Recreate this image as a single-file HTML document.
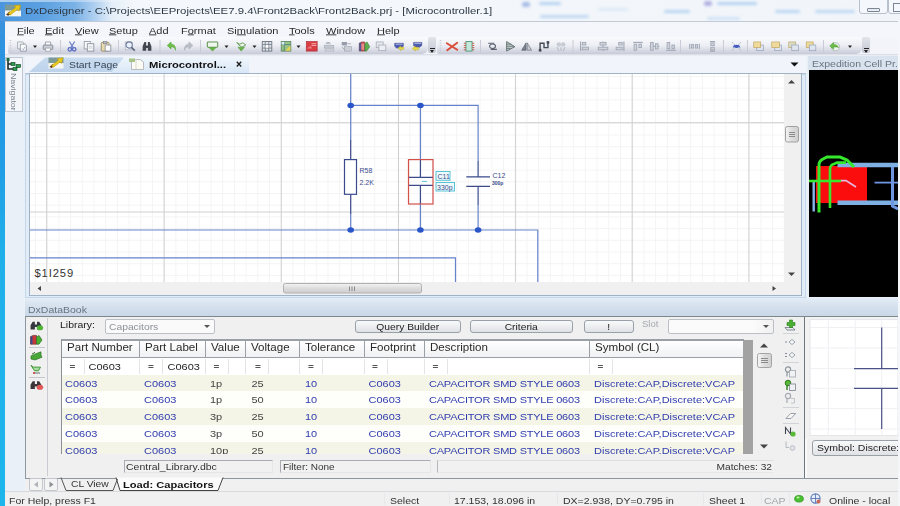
<!DOCTYPE html>
<html>
<head>
<meta charset="utf-8">
<title>DxDesigner</title>
<style>
html,body{margin:0;padding:0}
body{width:900px;height:506px;position:relative;overflow:hidden;background:#eef2f8;font-family:"Liberation Sans",sans-serif;font-size:11px;color:#222}
.a{position:absolute}
.t{position:absolute;white-space:nowrap;line-height:1;transform:scaleY(.87)}
.sq{display:inline-block;transform:scaleY(.87)}
#blur{position:absolute;left:0;top:0;width:900px;height:506px;filter:blur(0.5px)}
.menu{top:25px;font-size:11px;color:#2a2a2a}
.hdr{background:linear-gradient(#e4edf7,#d7e2ee 40%,#c9d7e7);}
.th{position:absolute;top:340px;height:18px;box-sizing:border-box;border-right:1px solid #9aa0a8;border-bottom:1px solid #9aa0a8;border-top:1px solid #9aa0a8;background:linear-gradient(#ffffff,#f0f1f3);font-size:11.6px;color:#2a2a2a;line-height:13px;padding-left:5px;white-space:nowrap;overflow:hidden}
.row{position:absolute;left:62px;width:681px}
.c{position:absolute;font-size:11px;white-space:nowrap;line-height:1;color:#2f3cae;transform:scaleY(.87)}
.k{color:#444}
.eq{position:absolute;top:361.5px;font-size:10px;color:#555;line-height:1;font-weight:bold;transform:scaleY(.87)}
.btn{position:absolute;box-sizing:border-box;border:1px solid #9aa0a8;border-radius:3px;background:linear-gradient(#f8f9fa,#eceef0 50%,#dfe1e5);font-size:10.3px;color:#222;text-align:center;white-space:nowrap;line-height:11px}
.st{position:absolute;top:495px;font-size:10.5px;color:#333;white-space:nowrap;line-height:1;transform:scaleY(.87)}
.fld{position:absolute;box-sizing:border-box;top:460px;height:13px;border:1px solid #e4e6e8;border-top-color:#a8acb2;border-left-color:#a8acb2;background:#f1f1f1;font-size:10.5px;line-height:11px;color:#333;padding-left:1px;white-space:nowrap}
</style>
</head>
<body>
<div id="blur">
<div class="a" style="left:0;top:0;width:900px;height:21px;background:linear-gradient(90deg,#4a95de 0px,#5a9fe0 40px,#7ab2e6 75px,#b0d0f0 95px,#e4eef8 112px,#f4f7fb 135px,#f4f7fb 300px,#f1f5fa 900px)"></div>
<div class="a" style="left:0;top:0;width:140px;height:2px;background:linear-gradient(90deg,rgba(255,255,255,.55),rgba(255,255,255,.3) 100px,rgba(255,255,255,0))"></div>
<div class="a" style="left:522px;top:2px;width:8px;height:5px;background:#6a8cd8;opacity:0.55;filter:blur(1.6px);border-radius:2px"></div>
<div class="a" style="left:539px;top:2px;width:22px;height:3px;background:#8ab8e8;opacity:0.6;filter:blur(1.6px);border-radius:2px"></div>
<div class="a" style="left:540px;top:15px;width:49px;height:3px;background:#8ab8e8;opacity:0.5;filter:blur(1.6px);border-radius:2px"></div>
<div class="a" style="left:664px;top:10px;width:26px;height:3px;background:#8ab8e8;opacity:0.55;filter:blur(1.6px);border-radius:2px"></div>
<div class="a" style="left:704px;top:1px;width:8px;height:5px;background:#7a78d0;opacity:0.55;filter:blur(1.6px);border-radius:2px"></div>
<div class="a" style="left:717px;top:2px;width:40px;height:3px;background:#8ab8e8;opacity:0.6;filter:blur(1.6px);border-radius:2px"></div>
<div class="a" style="left:775px;top:10px;width:25px;height:3px;background:#8ab8e8;opacity:0.55;filter:blur(1.6px);border-radius:2px"></div>
<div class="a" style="left:815px;top:10px;width:40px;height:3px;background:#8ab8e8;opacity:0.5;filter:blur(1.6px);border-radius:2px"></div>
<div class="a" style="left:707px;top:17px;width:33px;height:3px;background:#9ac0ea;opacity:0.4;filter:blur(1.6px);border-radius:2px"></div>
<div class="a" style="left:598px;top:8px;width:30px;height:3px;background:#a8ccee;opacity:0.3;filter:blur(1.6px);border-radius:2px"></div>
<div class="a" style="left:0;top:21px;width:5px;height:485px;background:linear-gradient(#3a92de 0,#2494e2 10%,#229ee6 30%,#1fb0ea 48%,#1cb6ec 100%)"></div>
<div class="a" style="left:5px;top:21px;width:893px;height:1px;background:#c2cad4"></div>
<div class="a" style="left:5px;top:22px;width:893px;height:16px;background:#f4f6fb"></div>
<div class="a" style="left:859px;top:-3px;width:29px;height:17px;border:1px solid #b8c0cc;border-radius:3px;box-sizing:border-box;background:#f4f7fb"></div>
<div class="a" style="left:867px;top:8px;width:13px;height:4px;border:1px solid #7c8692;border-radius:1px;box-sizing:border-box;background:#e8ecf2"></div>
<div class="a" style="left:888px;top:-3px;width:20px;height:17px;border:1px solid #b8c0cc;border-radius:3px;box-sizing:border-box;background:#f4f7fb"></div>
<div class="a" style="left:893px;top:3px;width:10px;height:9px;border:1.5px solid #7c8692;box-sizing:border-box"></div>
<div class="t" style="left:25px;top:5px;font-size:11.4px;color:#2c3844">DxDesigner - C:\Projects\EEProjects\EE7.9.4\Front2Back\Front2Back.prj - [Microcontroller.1]</div>
<svg class="a" style="left:5px;top:4px" width="16" height="13" viewBox="0 0 15 12"><rect x="0" y="0.5" width="15" height="6" fill="#7c9a98"/><rect x="0" y="6" width="15" height="5.5" fill="#f6f6f2"/><path d="M1 10L4 7L6 9L3 11Z" fill="#5a3a20"/><path d="M3 8.5L10 3.2L8.6 1.6L14.5 0.8L13 6.6L11.6 5L5 10.2Z" fill="#e8c81c" stroke="#b89a10" stroke-width=".5"/></svg>
<div class="t menu" style="left:17px"><u>F</u>ile</div>
<div class="t menu" style="left:45px"><u>E</u>dit</div>
<div class="t menu" style="left:75px"><u>V</u>iew</div>
<div class="t menu" style="left:109px"><u>S</u>etup</div>
<div class="t menu" style="left:149px"><u>A</u>dd</div>
<div class="t menu" style="left:181px">F<u>o</u>rmat</div>
<div class="t menu" style="left:227px">Si<u>m</u>ulation</div>
<div class="t menu" style="left:289px"><u>T</u>ools</div>
<div class="t menu" style="left:326px"><u>W</u>indow</div>
<div class="t menu" style="left:377px"><u>H</u>elp</div>
<div class="a" style="left:5px;top:38px;width:893px;height:17px;background:#f2f4fa"></div>
<div class="a" style="left:8px;top:37px;width:420px;height:17px;border-radius:0 0 6px 2px;background:linear-gradient(#fafbfd,#eceef4 50%,#c8cad8)"></div>
<div class="a" style="left:437px;top:37px;width:425px;height:17px;border-radius:0 0 6px 2px;background:linear-gradient(#fafbfd,#eceef4 50%,#c8cad8)"></div>
<div class="a" style="left:5px;top:54px;width:893px;height:2px;background:linear-gradient(#d8dae4,#eef2f8)"></div>
<div class="a" style="left:428px;top:37px;width:8px;height:16px;border-radius:2px;background:linear-gradient(#e2e4ea,#c4c7d2)"></div>
<div class="a" style="left:430px;top:50px;width:0;height:0;border-left:2.5px solid transparent;border-right:2.5px solid transparent;border-top:3px solid #222"></div>
<div class="a" style="left:430px;top:48px;width:5px;height:1px;background:#222"></div>
<div class="a" style="left:862px;top:37px;width:8px;height:16px;border-radius:2px;background:linear-gradient(#e2e4ea,#c4c7d2)"></div>
<div class="a" style="left:864px;top:50px;width:0;height:0;border-left:2.5px solid transparent;border-right:2.5px solid transparent;border-top:3px solid #222"></div>
<div class="a" style="left:864px;top:48px;width:5px;height:1px;background:#222"></div>
<svg class="a" style="left:0;top:0" width="900" height="60" viewBox="0 0 900 60"><path d="M10.5 40V53" stroke="#c4c8d2" stroke-width="1.5" stroke-dasharray="1 1.5"/>
<path d="M440.5 40V53" stroke="#c4c8d2" stroke-width="1.5" stroke-dasharray="1 1.5"/>
<g transform="translate(16.8,41.1) scale(.87)" opacity=".88"><path d="M1 1H7L8 2V9H1Z" fill="#fdfdfd" stroke="#9098a4" stroke-width="1"/><path d="M4 3.5H10L11 4.5V11.5H4Z" fill="#fff" stroke="#808894" stroke-width="1"/><path d="M6 8.5L7.5 10L9.5 6.5" stroke="#9aa4b0" fill="none"/></g>
<path d="M33 45.6H37L35 48Z" fill="#222"/>
<g transform="translate(42.8,41.1) scale(.87)" opacity=".88"><path d="M3 1H9V5H3Z" fill="#fff" stroke="#8a909a"/><rect x="0.5" y="4.5" width="11" height="5" rx="1" fill="#c8ccd4" stroke="#6c7480"/><rect x="3" y="8" width="6" height="3.5" fill="#fff" stroke="#8a909a" stroke-width=".8"/></g>
<path d="M60.5 40V53" stroke="#c9ccd6" stroke-width="1"/>
<g transform="translate(66.8,41.1) scale(.87)" opacity=".88"><path d="M3 0.5L7.5 8M9 0.5L4.5 8" stroke="#5a6ec0" stroke-width="1.4" fill="none"/><circle cx="3.5" cy="9.5" r="2" fill="none" stroke="#3f58c0" stroke-width="1.4"/><circle cx="8.5" cy="9.5" r="2" fill="none" stroke="#3f58c0" stroke-width="1.4"/></g>
<g transform="translate(83.8,41.1) scale(.87)" opacity=".88"><rect x="0.5" y="0.5" width="7" height="8.5" fill="#fff" stroke="#8a919c"/><rect x="4" y="3" width="7.5" height="8.5" fill="#fdfdfd" stroke="#7c8490"/><path d="M5.5 6H10M5.5 8H10" stroke="#b4bac4" stroke-width=".8"/></g>
<g transform="translate(100.8,41.1) scale(.87)" opacity=".88"><rect x="0.5" y="1.5" width="9" height="10" rx="1" fill="#e6d8a8" stroke="#8a7a50"/><rect x="3" y="0.5" width="4" height="2.5" fill="#b0b4bc" stroke="#70747c" stroke-width=".7"/><rect x="5" y="4.5" width="6.5" height="7" fill="#fff" stroke="#808894"/></g>
<path d="M118.5 40V53" stroke="#c9ccd6" stroke-width="1"/>
<g transform="translate(124.8,41.1) scale(.87)" opacity=".88"><rect x="0.5" y="1" width="8" height="9" fill="#f4f8ff" stroke="#a0a8b4" stroke-width=".8"/><circle cx="5" cy="4.5" r="3.6" fill="#eaf4ff" stroke="#5a6a8c" stroke-width="1.2"/><path d="M7.6 7.2L11.5 11" stroke="#4a5670" stroke-width="1.8"/></g>
<g transform="translate(141.8,41.1) scale(.87)" opacity=".88"><path d="M1 11V6L3 1H5V5H7V1H9L11 6V11H7V8H5V11Z" fill="#2c3038"/></g>
<path d="M160 40V53" stroke="#c9ccd6" stroke-width="1"/>
<g transform="translate(166.3,41.1) scale(.87)" opacity=".88"><path d="M1 5L5.5 1V3.5C9 3.5 11 6 10.5 10.5C9.8 7.6 8.3 6.6 5.5 6.6V9Z" fill="#5cb830" stroke="#3c9418" stroke-width=".6"/></g>
<g transform="translate(183.3,41.1) scale(.87)" opacity=".88"><path d="M11 5L6.5 1V3.5C3 3.5 1 6 1.5 10.5C2.2 7.6 3.7 6.6 6.5 6.6V9Z" fill="#b4b8c0" stroke="#9ca0aa" stroke-width=".6"/></g>
<path d="M200.5 40V53" stroke="#c9ccd6" stroke-width="1"/>
<g transform="translate(207.3,41.1) scale(.87)" opacity=".88"><rect x="0" y="1" width="12" height="6" rx="1" fill="#f0f8ee" stroke="#4c8a3c" stroke-width="1.2"/><path d="M2 7.5H10L6 11.5Z" fill="#58b030" stroke="#3c8c20" stroke-width=".6"/></g>
<path d="M224.5 45.6H228.5L226.5 48Z" fill="#222"/>
<g transform="translate(235.8,41.1) scale(.87)" opacity=".88"><path d="M1 1.5L4 4" stroke="#3c8c20" stroke-width="1.2"/><path d="M3 4L8 2L11.5 4.5L7 7Z" fill="#eef6ea" stroke="#4c8a3c"/><path d="M2.5 7H10L6.2 11.5Z" fill="#58b030" stroke="#3c8c20" stroke-width=".6"/></g>
<path d="M252.5 45.6H256.5L254.5 48Z" fill="#222"/>
<g transform="translate(261.8,41.1) scale(.87)" opacity=".88"><rect x="0.5" y="0.5" width="11" height="11" fill="#dfe4ea" stroke="#5a6470"/><path d="M0.5 4H11.5M0.5 8H11.5M4 .5V11.5M8 .5V11.5" stroke="#5a6470" stroke-width=".9"/><rect x="4.4" y="4.4" width="3.2" height="3.2" fill="#fff"/></g>
<g transform="translate(280.8,41.1) scale(.87)" opacity=".88"><rect x="0.5" y="0.5" width="11" height="11" fill="#8cc070" stroke="#4a7a5a"/><path d="M0.5 4H11.5M4 .5V11.5" stroke="#3a6a7a" stroke-width=".9"/><path d="M5 11L11 5V11Z" fill="#e4d040"/><rect x="1" y="1" width="3" height="3" fill="#d8ecf4"/></g>
<path d="M296.5 45.6H300.5L298.5 48Z" fill="#222"/>
<g transform="translate(306.3,41.1) scale(.87)" opacity=".88"><rect x="0" y="0.5" width="12.5" height="11" fill="#d8262c" stroke="#a81820" stroke-width=".8"/><path d="M6 3H11.5M6 5H11.5" stroke="#f8b0b0" stroke-width="1"/><path d="M0.5 8.5L5 5.5L7 8.5" fill="#f07070"/></g>
<g transform="translate(323.8,41.1) scale(.87)" opacity=".88"><path d="M2 3H8M3 1.5H7" stroke="#a8acb6" stroke-width="1.2"/><rect x="0.5" y="5" width="11" height="3" fill="#c4c8d0" stroke="#9ca0ac" stroke-width=".7"/><rect x="1.5" y="9" width="10" height="2.5" fill="#d4d7de" stroke="#a8acb6" stroke-width=".7"/></g>
<g transform="translate(341.3,41.1) scale(.87)" opacity=".88"><rect x="0.5" y="1" width="6" height="4" fill="#8c929e"/><path d="M7 3H11" stroke="#a8acb6" stroke-width="1.2"/><rect x="3.5" y="6" width="8" height="5.5" fill="#c8ccd4" stroke="#9ca0ac" stroke-width=".7"/><path d="M1 7L4 10" stroke="#8c929e" stroke-width="1"/></g>
<g transform="translate(358.8,41.1) scale(.87)" opacity=".88"><path d="M0.5 2.5L3 1H7V11.5H0.5Z" fill="#c83838" stroke="#6a3030" stroke-width=".7"/><path d="M3 3H6V10H3Z" fill="#e88080"/><path d="M7 3L9.5 1L12.5 6.5L9 11.5H7Z" fill="#48a838" stroke="#2c6c24" stroke-width=".7"/><rect x="0.5" y="2" width="2.2" height="9.5" fill="#3a4a8a"/></g>
<g transform="translate(375.8,41.1) scale(.87)" opacity=".88"><rect x="0.5" y="1" width="8" height="6.5" fill="#e6e8ee" stroke="#a4a8b4"/><rect x="3.5" y="4.5" width="8" height="6.5" fill="#eef0f4" stroke="#a4a8b4"/></g>
<g transform="translate(393.8,41.1) scale(.87)" opacity=".88"><path d="M1 2.5H11V6L8 8H3L1 6Z" fill="#3848a8" stroke="#28347c" stroke-width=".6"/><path d="M2 3.6H10" stroke="#c8d0f0" stroke-width=".9"/><path d="M5 8L8 5.5V7H11.5V9.5H8V11Z" fill="#e8dc30" stroke="#a89c18" stroke-width=".5"/></g>
<g transform="translate(411.8,41.1) scale(.87)" opacity=".88"><path d="M2 1.5H11.5V5L9 7H4L2 5Z" fill="#3848a8" stroke="#28347c" stroke-width=".6"/><path d="M3 2.6H10.5" stroke="#c8d0f0" stroke-width=".9"/><path d="M0.5 8.5L4 5.5V7.2H8V10H4V11.5Z" fill="#e8dc30" stroke="#a89c18" stroke-width=".5"/></g>
<g transform="translate(446.8,41.1) scale(.87)" opacity=".88"><path d="M0 2.5L12 10M12 2L0.5 10.5" stroke="#d83820" stroke-width="2.2" stroke-linecap="round"/></g>
<g transform="translate(463.8,41.1) scale(.87)" opacity=".88"><rect x="2.5" y="0.5" width="7" height="11" fill="#bfe8d8" stroke="#3c8a6c"/><path d="M0 2.5H2.5M0 5H2.5M0 7.5H2.5M0 10H2.5M9.5 2.5H12M9.5 5H12M9.5 7.5H12M9.5 10H12" stroke="#c0442c" stroke-width="1.1"/></g>
<path d="M480.5 40V53" stroke="#c9ccd6" stroke-width="1"/>
<g transform="translate(487.3,41.1) scale(.87)" opacity=".88"><ellipse cx="6" cy="6" rx="3.4" ry="2.6" fill="none" stroke="#4a525e" stroke-width="1.3"/><path d="M1 2.5H8M4 9.5H11" stroke="#4a525e" stroke-width="1.2"/></g>
<g transform="translate(505.3,41.1) scale(.87)" opacity=".88"><path d="M1.5 0.5V11.5L11 6.5Z" fill="#b8c4c0" stroke="#4a5a56" stroke-width="1"/><path d="M1.5 3.5H7M1.5 6H10M1.5 8.5H6" stroke="#4a5a56" stroke-width=".8"/></g>
<g transform="translate(521.3,41.1) scale(.87)" opacity=".88"><path d="M5.5 2V10.5H0.5Z" fill="#6a7480" stroke="#4a525e" stroke-width=".8"/><path d="M6.8 2V10.5H11.8Z" fill="#c4cad2" stroke="#5a626e" stroke-width=".8"/></g>
<g transform="translate(538.8,41.1) scale(.87)" opacity=".88"><path d="M1.5 10V2.5H6V7.5H10.5V1" fill="none" stroke="#2c3440" stroke-width="1.6"/><rect x="0" y="9" width="3" height="3" fill="#2c3440"/><rect x="9" y="0" width="3" height="3" fill="#2c3440"/></g>
<g transform="translate(555.8,41.1) scale(.87)" opacity=".88"><circle cx="3.5" cy="4" r="2.6" fill="#c4c8d0"/><circle cx="8.5" cy="4" r="2.6" fill="#c4c8d0"/><path d="M1.5 7L3.5 11.5M6 7V11M10.5 7L8.5 11.5" stroke="#b0b4be" stroke-width="1.2"/></g>
<path d="M573 40V53" stroke="#c9ccd6" stroke-width="1"/>
<g transform="translate(579.3,41.1) scale(.87)" opacity=".88"><path d="M1.5 .5V11.5" stroke="#969eac" stroke-width="1.3"/><rect x="3.5" y="1.5" width="4" height="3" fill="#cdd1da" stroke="#969eac"/><rect x="3.5" y="7" width="7" height="3" fill="#cdd1da" stroke="#969eac"/></g>
<g transform="translate(597.8,41.1) scale(.87)" opacity=".88"><path d="M6 .5V11.5" stroke="#969eac" stroke-width="1.3"/><rect x="2.5" y="1.5" width="7" height="3" fill="#cdd1da" stroke="#969eac"/><rect x="0.5" y="7" width="11" height="3" fill="#cdd1da" stroke="#969eac"/></g>
<g transform="translate(614.8,41.1) scale(.87)" opacity=".88"><path d="M10.5 .5V11.5" stroke="#969eac" stroke-width="1.3"/><rect x="4.5" y="1.5" width="4" height="3" fill="#cdd1da" stroke="#969eac"/><rect x="1.5" y="7" width="7" height="3" fill="#cdd1da" stroke="#969eac"/></g>
<g transform="translate(632.8,41.1) scale(.87)" opacity=".88"><path d="M.5 1.5H11.5" stroke="#969eac" stroke-width="1.3"/><rect x="1.5" y="3.5" width="3" height="7" fill="#cdd1da" stroke="#969eac"/><rect x="7" y="3.5" width="3" height="4" fill="#cdd1da" stroke="#969eac"/></g>
<g transform="translate(649.3,41.1) scale(.87)" opacity=".88"><path d="M.5 6H11.5" stroke="#969eac" stroke-width="1.3"/><rect x="1.5" y="1.5" width="3" height="9" fill="#cdd1da" stroke="#969eac"/><rect x="7" y="3" width="3" height="6" fill="#cdd1da" stroke="#969eac"/></g>
<g transform="translate(665.8,41.1) scale(.87)" opacity=".88"><path d="M.5 10.5H11.5" stroke="#969eac" stroke-width="1.3"/><rect x="1.5" y="1.5" width="3" height="7" fill="#cdd1da" stroke="#969eac"/><rect x="7" y="4.5" width="3" height="4" fill="#cdd1da" stroke="#969eac"/></g>
<path d="M680.5 40V53" stroke="#c9ccd6" stroke-width="1"/>
<g transform="translate(689.3,41.1) scale(.87)" opacity=".88"><path d="M.5 3V9M11.5 3V9" stroke="#969eac" stroke-width="1.2"/><rect x="2.5" y="4" width="2.5" height="4" fill="#cdd1da" stroke="#969eac"/><rect x="7" y="4" width="2.5" height="4" fill="#cdd1da" stroke="#969eac"/></g>
<g transform="translate(707.3,41.1) scale(.87)" opacity=".88"><path d="M3 .5H9M3 11.5H9" stroke="#969eac" stroke-width="1.2"/><rect x="4" y="2" width="4" height="3" fill="#cdd1da" stroke="#969eac"/><rect x="4" y="7" width="4" height="3" fill="#cdd1da" stroke="#969eac"/></g>
<path d="M723.5 40V53" stroke="#c9ccd6" stroke-width="1"/>
<g transform="translate(731.3,41.1) scale(.87)" opacity=".88"><path d="M1 1.5L11 10.5M11 1.5L1 10.5" stroke="#8c98b4" stroke-width="1" stroke-dasharray="1.5 1"/><path d="M3 4.5H9L10.5 7.5H1.5Z" fill="#3c58c8"/><circle cx="6" cy="6" r="1.8" fill="#2c44b0"/></g>
<path d="M747.5 40V53" stroke="#c9ccd6" stroke-width="1"/>
<g transform="translate(753.3,41.1) scale(.87)" opacity=".88"><rect x="4" y="4.5" width="7.5" height="6.5" fill="#dfe6f0" stroke="#8a98b0" stroke-width=".8"/><rect x="0.5" y="1" width="8" height="6.5" fill="#f0d890" stroke="#b89c50" stroke-width=".8"/></g>
<g transform="translate(771.3,41.1) scale(.87)" opacity=".88"><rect x="4" y="4.5" width="7.5" height="6.5" fill="#dfe6f0" stroke="#8a98b0" stroke-width=".8"/><rect x="0.5" y="1" width="9" height="6.5" fill="#f0d890" stroke="#b89c50" stroke-width=".8"/></g>
<g transform="translate(788.3,41.1) scale(.87)" opacity=".88"><rect x="0.5" y="1" width="8" height="6.5" fill="#d8dcc0" stroke="#b89c50" stroke-width=".8"/><rect x="4" y="4.5" width="7.5" height="6.5" fill="#dfe6f0" stroke="#8a98b0" stroke-width=".8"/></g>
<g transform="translate(805.8,41.1) scale(.87)" opacity=".88"><rect x="0.5" y="1" width="8" height="6.5" fill="#f0d890" stroke="#b89c50" stroke-width=".8"/><rect x="4" y="4.5" width="7.5" height="6.5" fill="#dfe6f0" stroke="#8a98b0" stroke-width=".8"/></g>
<path d="M823.5 40V53" stroke="#c9ccd6" stroke-width="1"/>
<g transform="translate(829.3,41.1) scale(.87)" opacity=".88"><circle cx="7" cy="6.5" r="4.6" fill="#f4f8f4" stroke="#a8b0b0" stroke-width="1"/><path d="M0.5 5.5L5 1.5V4C8 4 10 5 10.5 7.5C9 6.6 7.5 6.8 5 6.8V9.5Z" fill="#58b830" stroke="#3c9018" stroke-width=".6"/></g>
<path d="M848 45.6H852L850 48Z" fill="#222"/></svg><div class="a" style="left:5px;top:56px;width:20px;height:436px;background:#eaf0f8"></div>
<div class="a" style="left:5px;top:57px;width:18px;height:55px;box-sizing:border-box;border:1px solid #c0c8d4;background:#f4f6fa"></div>
<svg class="a" style="left:6px;top:58px" width="16" height="14" viewBox="0 0 16 14"><path d="M2 1V11H8M2 6H6" stroke="#1c2c24" stroke-width="1.6" fill="none"/><rect x="0.5" y="0" width="3" height="3" fill="#1c6c3c"/><rect x="5" y="4.5" width="4" height="3" fill="#2c9c4c" stroke="#0c3c1c" stroke-width=".6"/><rect x="10" y="6.5" width="4.5" height="3" fill="#2c9c4c" stroke="#0c3c1c" stroke-width=".6"/><rect x="7" y="9.5" width="4" height="3" fill="#2c9c4c" stroke="#0c3c1c" stroke-width=".6"/></svg>
<div class="t" style="left:9px;top:73px;font-size:8.8px;color:#7a828e;writing-mode:vertical-rl;transform:scaleX(.87)">Navigator</div>
<div class="a" style="left:25px;top:56px;width:781px;height:18px;background:#f1f5fb"></div>
<svg class="a" style="left:25px;top:55px" width="785" height="20" viewBox="25 55 785 20"><defs><linearGradient id="tg" x1="0" y1="0" x2="0" y2="1"><stop offset="0" stop-color="#f0f6fc"/><stop offset="1" stop-color="#d6e6f6"/></linearGradient><linearGradient id="tg2" x1="0" y1="0" x2="0" y2="1"><stop offset="0" stop-color="#c9dcf0"/><stop offset="1" stop-color="#bdd3ea"/></linearGradient></defs><path d="M29 72L45 57.5H124L112 72Z" fill="url(#tg2)"/><path d="M110 74L125 57H247Q249 57 249 59V74Z" fill="url(#tg)"/><path d="M25 73.5H806" stroke="#b4c4d6" stroke-width="1"/><path d="M111 73.5H249" stroke="#dcE8f6" stroke-width="1.5"/><path d="M790.5 62.5H798.5L794.5 66.5Z" fill="#111"/><path d="M131.5 59.5H140L143.5 62V69.5H131.5Z" fill="#fbfbf4" stroke="#b8bcc0" stroke-width="1"/><path d="M136 59.5V69" stroke="#d8dcd0" stroke-width="1"/><path d="M129 58.5H135V62H129Z" fill="#a8c488"/><path d="M236.8 61.8L241.2 66.4M241.2 61.8L236.8 66.4" stroke="#222" stroke-width="1.4"/></svg>
<svg class="a" style="left:48px;top:57px" width="16" height="12" viewBox="0 0 15 12"><rect x="0" y="0.5" width="15" height="6" fill="#7c9a98"/><rect x="0" y="6" width="15" height="5.5" fill="#f6f6f2"/><path d="M1 10L4 7L6 9L3 11Z" fill="#5a3a20"/><path d="M3 8.5L10 3.2L8.6 1.6L14.5 0.8L13 6.6L11.6 5L5 10.2Z" fill="#e8c81c" stroke="#b89a10" stroke-width=".5"/></svg>
<div class="t" style="left:69px;top:59.6px;font-size:10.4px;color:#3a4654">Start Page</div>
<div class="t" style="left:149px;top:59.4px;font-size:11.2px;font-weight:bold;color:#111">Microcontrol...</div>
<div class="a" style="left:25px;top:74px;width:781px;height:224px;box-sizing:border-box;border:1px solid #c4d8ec;background:#e2ecf8"></div>
<div class="a" style="left:29px;top:73px;width:773px;height:223px;box-sizing:border-box;border:1px solid #9fb2c6;background:#f0f0f0"></div>
<svg class="a" style="left:30px;top:74px" width="771" height="221" viewBox="30 74 771 221">
<defs><pattern id="g" x="46.7" y="122.8" width="11.7" height="11.7" patternUnits="userSpaceOnUse"><path d="M0.5 0V11.7M0 0.5H11.7" stroke="#f4f4f4" stroke-width="1" fill="none"/></pattern><linearGradient id="sb" x1="0" y1="0" x2="0" y2="1"><stop offset="0" stop-color="#f4f4f4"/><stop offset=".5" stop-color="#dcdcdc"/><stop offset="1" stop-color="#cfcfcf"/></linearGradient><linearGradient id="sbv" x1="0" y1="0" x2="1" y2="0"><stop offset="0" stop-color="#f4f4f4"/><stop offset=".5" stop-color="#dcdcdc"/><stop offset="1" stop-color="#cfcfcf"/></linearGradient></defs>
<rect x="30" y="74" width="771" height="221" fill="#f0f0f0"/>
<rect x="30" y="74" width="754" height="208" fill="#fff"/>
<rect x="30" y="74" width="754" height="208" fill="url(#g)"/>
<line x1="46.7" y1="74" x2="46.7" y2="282" stroke="#d0d0d0" stroke-width="1"/>
<line x1="164.1" y1="74" x2="164.1" y2="282" stroke="#d0d0d0" stroke-width="1"/>
<line x1="281.3" y1="74" x2="281.3" y2="282" stroke="#d0d0d0" stroke-width="1"/>
<line x1="398.5" y1="74" x2="398.5" y2="282" stroke="#d0d0d0" stroke-width="1"/>
<line x1="515.6" y1="74" x2="515.6" y2="282" stroke="#d0d0d0" stroke-width="1"/>
<line x1="632.2" y1="74" x2="632.2" y2="282" stroke="#d0d0d0" stroke-width="1"/>
<line x1="748.9" y1="74" x2="748.9" y2="282" stroke="#d0d0d0" stroke-width="1"/>
<line x1="30" y1="122.7" x2="784" y2="122.7" stroke="#d0d0d0" stroke-width="1"/>
<line x1="30" y1="212" x2="784" y2="212" stroke="#d0d0d0" stroke-width="1"/>
<g stroke="#6582cc" stroke-width="1.2" fill="none">
<path d="M350.7 74V140M350.7 214V230M350.7 105.4H478.1V161M478.1 205V230M420.4 105.4V159.6M420.4 204V230M30 230H537.8V282M30 257.8H455.5V282"/>
</g>
<g stroke="#3a4a8c" stroke-width="1.2" fill="none">
<path d="M350.7 140V159.6M350.7 194.3V214M478.1 161V176.8M478.1 186.3V205M466.3 176.8H490M466.3 186.3H490"/>
<rect x="344.5" y="159.6" width="12" height="34.7" fill="#fff"/>
<path d="M420.4 159.6V177.4M420.4 185.4V204M408.5 177.4H433M408.5 185.4H433"/>
</g>
<rect x="408.5" y="159.6" width="24.5" height="44.4" fill="none" stroke="#d2524a" stroke-width="1.2"/>
<ellipse cx="350.7" cy="105.4" rx="3.3" ry="2.7" fill="#2a55c8"/>
<ellipse cx="420.4" cy="105.4" rx="3.3" ry="2.7" fill="#2a55c8"/>
<ellipse cx="350.7" cy="230" rx="3.3" ry="2.7" fill="#2a55c8"/>
<ellipse cx="420.4" cy="230" rx="3.3" ry="2.7" fill="#2a55c8"/>
<ellipse cx="478.1" cy="230" rx="3.3" ry="2.7" fill="#2a55c8"/>
<rect x="436" y="171.5" width="14" height="8.8" fill="#eefafc" stroke="#5ac4d6" stroke-width="1"/>
<rect x="436" y="182.5" width="18.5" height="8.5" fill="#eefafc" stroke="#5ac4d6" stroke-width="1"/>
<path d="M422 181.4H427" stroke="#5ac4d6" stroke-width="1"/>
<g font-family="Liberation Sans, sans-serif" fill="#3a4a8c">
<text x="437.5" y="178.8" font-size="7">C11</text>
<text x="437" y="189.8" font-size="7">330p</text>
<text x="359.5" y="173" font-size="7">R58</text>
<text x="359.5" y="184.5" font-size="7">2.2K</text>
<text x="492.5" y="177.5" font-size="7">C12</text>
<text x="492" y="184.5" font-size="5" font-weight="bold">300p</text>
</g>
<text x="34.5" y="276.5" font-family="Liberation Sans, sans-serif" font-size="11.2" letter-spacing=".9" fill="#333">$1I259</text>
<path d="M37.5 288.5L41 286V291Z" fill="#444"/><path d="M776 288.5L772.5 286V291Z" fill="#444"/>
<rect x="283.5" y="283.5" width="138" height="9.5" rx="2" fill="url(#sb)" stroke="#b0b0b0" stroke-width="1"/>
<path d="M349.5 286.5V291M352 286.5V291M354.5 286.5V291" stroke="#8a8a8a" stroke-width="1"/>
<path d="M788 83.5H795L791.5 80Z" fill="#444"/><path d="M788 272.5H795L791.5 276Z" fill="#444"/>
<rect x="785.5" y="126.5" width="13" height="15.5" rx="2" fill="url(#sbv)" stroke="#a0a0a0" stroke-width="1"/>
<path d="M789 132.5H795M789 134.5H795M789 136.5H795" stroke="#8a8a8a" stroke-width="1"/>
</svg>
<div class="a" style="left:806px;top:56px;width:92px;height:242px;background:#eaf0f8"></div>
<div class="a" style="left:808px;top:56px;width:90px;height:14px;background:#d9e3ee"></div>
<div class="t" style="left:812px;top:58px;font-size:10.5px;color:#687482">Expedition Cell Pr..</div>
<svg class="a" style="left:809px;top:70px" width="89" height="227" viewBox="809 70 89 227"><rect x="809" y="70" width="89" height="227" fill="#000"/><rect x="816" y="166" width="51" height="37" fill="#fb0d0d"/><path d="M837.5 165H898M837.5 202.8H898" stroke="#7fb0e4" stroke-width="4.4"/><path d="M892.5 167V206L898 209" stroke="#6e96e0" stroke-width="3" fill="none"/><path d="M874.5 182.6H898" stroke="#6e96e0" stroke-width="1.8"/><path d="M813.7 182V211.5" stroke="#88b4ec" stroke-width="2.4"/><path d="M819 212.5V165Q819 161 823 159L827 157H840L847 160L854 167" stroke="#35e82c" stroke-width="3" fill="none"/><path d="M830 208V169Q830 165 834 164L837 162.6H846" stroke="#35e82c" stroke-width="2.6" fill="none"/><path d="M809 181H841" stroke="#35e82c" stroke-width="2.6"/><path d="M841 180.6H846L856 187" stroke="#e8b8dc" stroke-width="1.8" fill="none"/></svg><div class="a hdr" style="left:25px;top:298px;width:873px;height:18px"></div>
<div class="t" style="left:28px;top:304px;font-size:10.5px;color:#687480">DxDataBook</div>
<div class="a" style="left:25px;top:316px;width:873px;height:162.5px;box-sizing:border-box;border-top:1px solid #7e868e;border-left:1px solid #8e969e;border-bottom:1px solid #8e969e;background:#f0f0f0"></div>
<div class="a" style="left:47px;top:318px;width:1px;height:158px;background:#c8ccd2"></div>
<div class="a" style="left:803.5px;top:317px;width:1.5px;height:161px;background:#70767e"></div>
<div class="a" style="left:805px;top:317px;width:2px;height:161px;background:#fafafa"></div>
<svg class="a" style="left:0;top:316px" width="50" height="90" viewBox="0 316 50 90"><g transform="translate(30,321) scale(1.08,.85)"><path d="M0.5 10V5L2.5 1H4.5V4H6.5V1H8.5L10.5 5V10H6.5V7H4.5V10Z" fill="#34383e"/><circle cx="9.2" cy="8" r="3" fill="#50b438"/></g><g transform="translate(30,334.5) scale(1,.92)"><path d="M0.5 2.5L3 1H6.5V10.5H0.5Z" fill="#c83838" stroke="#6a3030" stroke-width=".7"/><path d="M6.5 3L9 1L12 6L9 10.5H6.5Z" fill="#48b030" stroke="#2c6c24" stroke-width=".7"/><rect x="0.5" y="2" width="2" height="8.5" fill="#3a4a8a"/></g><path d="M29 347.5H45" stroke="#c4c8ce"/><g transform="translate(30,350.5) scale(1,.9)"><path d="M1 6L6 3.5L11 1.5V5L12 7.5L5 10.5L1 9.5Z" fill="#48a838" stroke="#2c6c24" stroke-width=".7"/><path d="M2 4L5 2" stroke="#2c6c24"/></g><g transform="translate(30,364) scale(1,.9)"><path d="M1 1.5L3.5 3.5H10.5L8.5 7.5H4.5Z" fill="#a8dca0" stroke="#3c9430" stroke-width="1"/><path d="M3 10H10" stroke="#58686c" stroke-width="1"/><circle cx="4" cy="10" r="1" fill="#d84040"/></g><path d="M29 377.5H45" stroke="#c4c8ce"/><g transform="translate(30,380.5) scale(1.08,.85)"><path d="M0.5 10V5L2.5 1H4.5V4H6.5V1H8.5L10.5 5V10H6.5V7H4.5V10Z" fill="#3c3438"/><circle cx="9.2" cy="8" r="3" fill="#e05858"/></g></svg>
<div class="t" style="left:60px;top:318.5px;font-size:10.5px;color:#222">Library:</div>
<div class="a" style="left:105px;top:319px;width:110px;height:15px;box-sizing:border-box;border:1px solid #bcc0c6;border-radius:2px;background:#fafafa"></div>
<div class="t" style="left:109px;top:321.5px;font-size:10.3px;color:#8c9096">Capacitors</div>
<div class="a" style="left:204px;top:325px;width:0;height:0;border-left:3px solid transparent;border-right:3px solid transparent;border-top:3px solid #555"></div>
<div class="btn" style="left:354.5px;top:320px;width:106.5px;height:13px"><span class="sq">Query Builder</span></div>
<div class="btn" style="left:470px;top:320px;width:102.5px;height:13px"><span class="sq">Criteria</span></div>
<div class="btn" style="left:583.5px;top:320px;width:50.5px;height:13px"><span class="sq">!</span></div>
<div class="t" style="left:642px;top:319px;font-size:9.5px;color:#a4a8ae">Slot</div>
<div class="a" style="left:668px;top:318.5px;width:106px;height:15.5px;box-sizing:border-box;border:1px solid #bcc0c6;border-radius:2px;background:linear-gradient(90deg,#fbfbfb 80%,#f0f0f0)"></div>
<div class="a" style="left:763px;top:325px;width:0;height:0;border-left:3px solid transparent;border-right:3px solid transparent;border-top:3px solid #555"></div>
<div class="a" style="left:61px;top:339px;width:683px;height:115px;background:#fff;border-left:1px solid #8a9096;border-top:1px solid #9aa0a6;box-sizing:border-box"></div>
<div class="th" style="left:62px;width:78px"><span class="sq">Part Number</span></div>
<div class="th" style="left:140px;width:66px"><span class="sq">Part Label</span></div>
<div class="th" style="left:206px;width:40px"><span class="sq">Value</span></div>
<div class="th" style="left:246px;width:54px"><span class="sq">Voltage</span></div>
<div class="th" style="left:300px;width:65px"><span class="sq">Tolerance</span></div>
<div class="th" style="left:365px;width:60px"><span class="sq">Footprint</span></div>
<div class="th" style="left:425px;width:165px"><span class="sq">Description</span></div>
<div class="th" style="left:590px;width:154px"><span class="sq">Symbol (CL)</span></div>
<div class="a" style="left:62px;top:358px;width:681px;height:17px;background:#fff"></div>
<div class="eq" style="left:69.5px">=</div>
<div class="eq" style="left:148px">=</div>
<div class="eq" style="left:213.5px">=</div>
<div class="eq" style="left:255px">=</div>
<div class="eq" style="left:308px">=</div>
<div class="eq" style="left:372px">=</div>
<div class="eq" style="left:432.5px">=</div>
<div class="eq" style="left:597.5px">=</div>
<div class="a" style="left:84px;top:359px;width:1px;height:15px;background:#e2e4e8"></div>
<div class="a" style="left:139px;top:359px;width:1px;height:15px;background:#e2e4e8"></div>
<div class="a" style="left:162px;top:359px;width:1px;height:15px;background:#e2e4e8"></div>
<div class="a" style="left:205px;top:359px;width:1px;height:15px;background:#e2e4e8"></div>
<div class="a" style="left:228px;top:359px;width:1px;height:15px;background:#e2e4e8"></div>
<div class="a" style="left:245px;top:359px;width:1px;height:15px;background:#e2e4e8"></div>
<div class="a" style="left:268px;top:359px;width:1px;height:15px;background:#e2e4e8"></div>
<div class="a" style="left:299px;top:359px;width:1px;height:15px;background:#e2e4e8"></div>
<div class="a" style="left:322px;top:359px;width:1px;height:15px;background:#e2e4e8"></div>
<div class="a" style="left:364px;top:359px;width:1px;height:15px;background:#e2e4e8"></div>
<div class="a" style="left:387px;top:359px;width:1px;height:15px;background:#e2e4e8"></div>
<div class="a" style="left:424px;top:359px;width:1px;height:15px;background:#e2e4e8"></div>
<div class="a" style="left:447px;top:359px;width:1px;height:15px;background:#e2e4e8"></div>
<div class="a" style="left:589px;top:359px;width:1px;height:15px;background:#e2e4e8"></div>
<div class="a" style="left:612px;top:359px;width:1px;height:15px;background:#e2e4e8"></div>
<div class="a" style="left:743px;top:359px;width:1px;height:15px;background:#e2e4e8"></div>
<div class="t" style="left:88.5px;top:361px;font-size:11px;color:#222">C0603</div>
<div class="t" style="left:167.5px;top:361px;font-size:11px;color:#222">C0603</div>
<div class="row" style="top:374.5px;height:16.8px;background:#f5f5e7;overflow:hidden"><span class="c" style="left:3px;top:3px">C0603</span><span class="c" style="left:82px;top:3px">C0603</span><span class="c k" style="left:148px;top:3px">1p</span><span class="c k" style="left:189.5px;top:3px">25</span><span class="c" style="left:243px;top:3px">10</span><span class="c" style="left:306.5px;top:3px">C0603</span><span class="c" style="left:367px;top:3px;letter-spacing:-.22px">CAPACITOR SMD STYLE 0603</span><span class="c" style="left:532px;top:3px">Discrete:CAP,Discrete:VCAP</span></div>
<div class="row" style="top:391.3px;height:16.8px;background:#fefefb;overflow:hidden"><span class="c" style="left:3px;top:3px">C0603</span><span class="c" style="left:82px;top:3px">C0603</span><span class="c k" style="left:148px;top:3px">1p</span><span class="c k" style="left:189.5px;top:3px">50</span><span class="c" style="left:243px;top:3px">10</span><span class="c" style="left:306.5px;top:3px">C0603</span><span class="c" style="left:367px;top:3px;letter-spacing:-.22px">CAPACITOR SMD STYLE 0603</span><span class="c" style="left:532px;top:3px">Discrete:CAP,Discrete:VCAP</span></div>
<div class="row" style="top:408.1px;height:16.8px;background:#f5f5e7;overflow:hidden"><span class="c" style="left:3px;top:3px">C0603</span><span class="c" style="left:82px;top:3px">C0603</span><span class="c k" style="left:148px;top:3px">3p</span><span class="c k" style="left:189.5px;top:3px">25</span><span class="c" style="left:243px;top:3px">10</span><span class="c" style="left:306.5px;top:3px">C0603</span><span class="c" style="left:367px;top:3px;letter-spacing:-.22px">CAPACITOR SMD STYLE 0603</span><span class="c" style="left:532px;top:3px">Discrete:CAP,Discrete:VCAP</span></div>
<div class="row" style="top:424.9px;height:16.8px;background:#fefefb;overflow:hidden"><span class="c" style="left:3px;top:3px">C0603</span><span class="c" style="left:82px;top:3px">C0603</span><span class="c k" style="left:148px;top:3px">3p</span><span class="c k" style="left:189.5px;top:3px">50</span><span class="c" style="left:243px;top:3px">10</span><span class="c" style="left:306.5px;top:3px">C0603</span><span class="c" style="left:367px;top:3px;letter-spacing:-.22px">CAPACITOR SMD STYLE 0603</span><span class="c" style="left:532px;top:3px">Discrete:CAP,Discrete:VCAP</span></div>
<div class="row" style="top:441.7px;height:12.3px;background:#f5f5e7;overflow:hidden"><span class="c" style="left:3px;top:3px">C0603</span><span class="c" style="left:82px;top:3px">C0603</span><span class="c k" style="left:148px;top:3px">10p</span><span class="c k" style="left:189.5px;top:3px">25</span><span class="c" style="left:243px;top:3px">10</span><span class="c" style="left:306.5px;top:3px">C0603</span><span class="c" style="left:367px;top:3px;letter-spacing:-.22px">CAPACITOR SMD STYLE 0603</span><span class="c" style="left:532px;top:3px">Discrete:CAP,Discrete:VCAP</span></div>
<div class="a" style="left:743px;top:340px;width:9.5px;height:114px;background:#a2a2a2"></div>
<div class="a" style="left:752.5px;top:340px;width:20.5px;height:114px;background:#f0f0f0"></div>
<svg class="a" style="left:755px;top:340px" width="18" height="114" viewBox="755 340 18 114"><defs><linearGradient id="sbv2" x1="0" y1="0" x2="1" y2="0"><stop offset="0" stop-color="#f6f6f6"/><stop offset=".5" stop-color="#dedede"/><stop offset="1" stop-color="#d0d0d0"/></linearGradient></defs><path d="M760 347.5H768L764 343.5Z" fill="#444"/><path d="M760 444.5H768L764 448.5Z" fill="#444"/><rect x="757.5" y="353.5" width="14" height="14" rx="2" fill="url(#sbv2)" stroke="#a4a4a4"/><path d="M761 358.5H768M761 360.5H768M761 362.5H768" stroke="#8a8a8a"/></svg>
<div class="fld" style="left:124px;width:149px"><span class="sq">Central_Library.dbc</span></div>
<div class="fld" style="left:280px;width:151px;padding-left:2px;font-size:10px"><span class="sq">Filter: None</span></div>
<div class="fld" style="left:437px;width:337px;text-align:right;padding-right:1px;font-size:10.2px;border-color:#dcdee0 transparent #e8e8e8 #b4b8bc"><span class="sq">Matches: 32</span></div>
<svg class="a" style="left:780px;top:316px" width="24" height="150" viewBox="780 316 24 150"><g transform="translate(784,319.5)"><path d="M1 8H9L11 10.5H3Z" fill="#e8ecf0" stroke="#6c7480" stroke-width=".8"/><path d="M5.5 0.5H8.5V3H11V6H8.5V8H5.5V6H3V3H5.5Z" fill="#48b030" stroke="#2c7c1c" stroke-width=".6"/></g><path d="M783 333.5H799" stroke="#d0d4d8"/><g transform="translate(784,338)"><path d="M1 4H3" stroke="#889" stroke-width="1"/><path d="M5 4L8 1.5L11 4L8 6.5Z" fill="#f8f8f8" stroke="#9098a4" stroke-width=".9"/></g><g transform="translate(784,351)"><path d="M1 2.5H3M1 5.5H3" stroke="#889" stroke-width="1"/><path d="M5 4L8 1.5L11 4L8 6.5Z" fill="#f8f8f8" stroke="#9098a4" stroke-width=".9"/></g><path d="M783 362.5H799" stroke="#d0d4d8"/><g transform="translate(784,366)"><circle cx="4" cy="3.5" r="2.6" fill="none" stroke="#8c949c" stroke-width="1.2"/><path d="M3 6V10.5" stroke="#8c949c" stroke-width="1.2"/><rect x="5.5" y="4.5" width="6" height="6.5" fill="#f0f2f4" stroke="#a0a6ae" stroke-width=".8"/></g><g transform="translate(784,379.5)"><circle cx="4" cy="3.5" r="2.8" fill="#58b838" stroke="#2c7c1c" stroke-width="1"/><path d="M3 6V10.5" stroke="#2c7c1c" stroke-width="1.4"/><rect x="5.5" y="4.5" width="6" height="6.5" fill="#eef0f4" stroke="#7c848c" stroke-width=".8"/></g><g transform="translate(784,392.5)"><circle cx="4" cy="3.5" r="2.6" fill="none" stroke="#a4aab2" stroke-width="1.2"/><path d="M3 6V10.5" stroke="#a4aab2" stroke-width="1.2"/><path d="M7 6H10.5V10.5H7" fill="none" stroke="#b4bac0" stroke-width=".8"/></g><path d="M783 407.5H799" stroke="#d0d4d8"/><g transform="translate(784,411)"><path d="M2 7.5L6 2.5H11L7 7.5Z" fill="#f8f8f8" stroke="#9098a0" stroke-width=".9" transform="skewX(-8) translate(1,0)"/></g><path d="M783 423.5H799" stroke="#d0d4d8"/><g transform="translate(784,426)"><path d="M1.5 8V1.5L6.5 8V1.5" fill="none" stroke="#3c4450" stroke-width="1.1"/><circle cx="9" cy="8" r="2.6" fill="#58b838"/></g><g transform="translate(784,440.5)"><path d="M2 1V7H5" fill="none" stroke="#b4bac0" stroke-width="1"/><circle cx="8.5" cy="7.5" r="2.4" fill="#dfe2e6" stroke="#b4bac0" stroke-width=".8"/></g></svg>
<svg class="a" style="left:805px;top:317px" width="93" height="122" viewBox="805 317 93 122"><rect x="805" y="317" width="93" height="122" fill="#f2f2f2"/><rect x="810" y="319.5" width="88" height="116" fill="#fff" stroke="#e4e6ea" stroke-width="1"/><path d="M828.3 319.5V435.5" stroke="#f0f0f4"/><path d="M855.3 319.5V435.5" stroke="#f0f0f4"/><path d="M881.7 319.5V435.5" stroke="#f0f0f4"/><path d="M810 327.5H898" stroke="#f0f0f4"/><path d="M810 348H898" stroke="#f0f0f4"/><path d="M810 368.6H898" stroke="#f0f0f4"/><path d="M810 388.3H898" stroke="#f0f0f4"/><path d="M810 408.4H898" stroke="#f0f0f4"/><path d="M810 429H898" stroke="#f0f0f4"/><path d="M881.7 327.5V368.6M881.7 388.3V429M854 368.6H898M854 388.3H898" stroke="#4a5088" stroke-width="1.2" fill="none"/></svg>
<div class="btn" style="left:812px;top:440px;width:92px;height:16px;font-size:10.5px;line-height:14px;text-align:left;padding-left:4px;border-radius:3px 0 0 3px"><span class="sq">Symbol: Discrete:</span></div>
<div class="a" style="left:25px;top:478.5px;width:873px;height:13px;background:#f0f0f0"></div>
<svg class="a" style="left:25px;top:477px" width="260" height="15" viewBox="25 477 260 15"><rect x="29.5" y="478.5" width="13" height="12" rx="1.5" fill="#f4f4f4" stroke="#c4c8cc"/><rect x="44.5" y="478.5" width="13" height="12" rx="1.5" fill="#f4f4f4" stroke="#c4c8cc"/><path d="M38 481.5V487.5L34 484.5Z" fill="#b0b4b8"/><path d="M49.5 481.5V487.5L53.5 484.5Z" fill="#8c9094"/><path d="M116 477.5L120 490.5H218L223 477.5" fill="#fcfcfc" stroke="#444" stroke-width="1"/><path d="M61 477.5L66 490.5H113L117.5 479" fill="none" stroke="#555" stroke-width="1"/></svg>
<div class="t" style="left:71px;top:479px;font-size:10.3px;color:#333">CL View</div>
<div class="t" style="left:123px;top:479px;font-size:11.1px;font-weight:bold;color:#111">Load: Capacitors</div>
<div class="a" style="left:5px;top:491px;width:895px;height:15px;background:#f0f0f0;border-top:1px solid #d8dade;box-sizing:border-box"></div>
<div class="st" style="left:9px;color:#333">For Help, press F1</div>
<div class="st" style="left:390px;color:#333">Select</div>
<div class="st" style="left:454px;color:#333">17.153, 18.096 in</div>
<div class="st" style="left:563px;color:#333">DX=2.938, DY=0.795 in</div>
<div class="st" style="left:709px;color:#333">Sheet 1</div>
<div class="st" style="left:764px;color:#a0a4a8">CAP</div>
<div class="st" style="left:829px;color:#333">Online - local</div>
<svg class="a" style="left:790px;top:492px" width="40" height="14" viewBox="790 492 40 14"><ellipse cx="799" cy="498.8" rx="4.4" ry="3.3" fill="#48c030" stroke="#2c8c1c" stroke-width=".7"/><ellipse cx="798" cy="497.6" rx="1.6" ry="1" fill="#b8f0a0"/><circle cx="815.5" cy="498.5" r="4.6" fill="#e8f0fc" stroke="#5a78b8" stroke-width="1.1"/><path d="M811 498.5H820M815.5 494V503" stroke="#5a78b8" stroke-width=".9"/><circle cx="818.5" cy="501.5" r="2" fill="#c86858"/></svg>
<div class="a" style="left:384px;top:493px;width:1px;height:12px;background:#e6e7ea"></div>
<div class="a" style="left:449px;top:493px;width:1px;height:12px;background:#e6e7ea"></div>
<div class="a" style="left:557px;top:493px;width:1px;height:12px;background:#e6e7ea"></div>
<div class="a" style="left:703px;top:493px;width:1px;height:12px;background:#e6e7ea"></div>
<div class="a" style="left:761px;top:493px;width:1px;height:12px;background:#e6e7ea"></div>
<div class="a" style="left:789px;top:493px;width:1px;height:12px;background:#e6e7ea"></div>
<div class="a" style="left:898px;top:21px;width:2px;height:485px;background:#f4f6fa"></div>
</div>
</body>
</html>
